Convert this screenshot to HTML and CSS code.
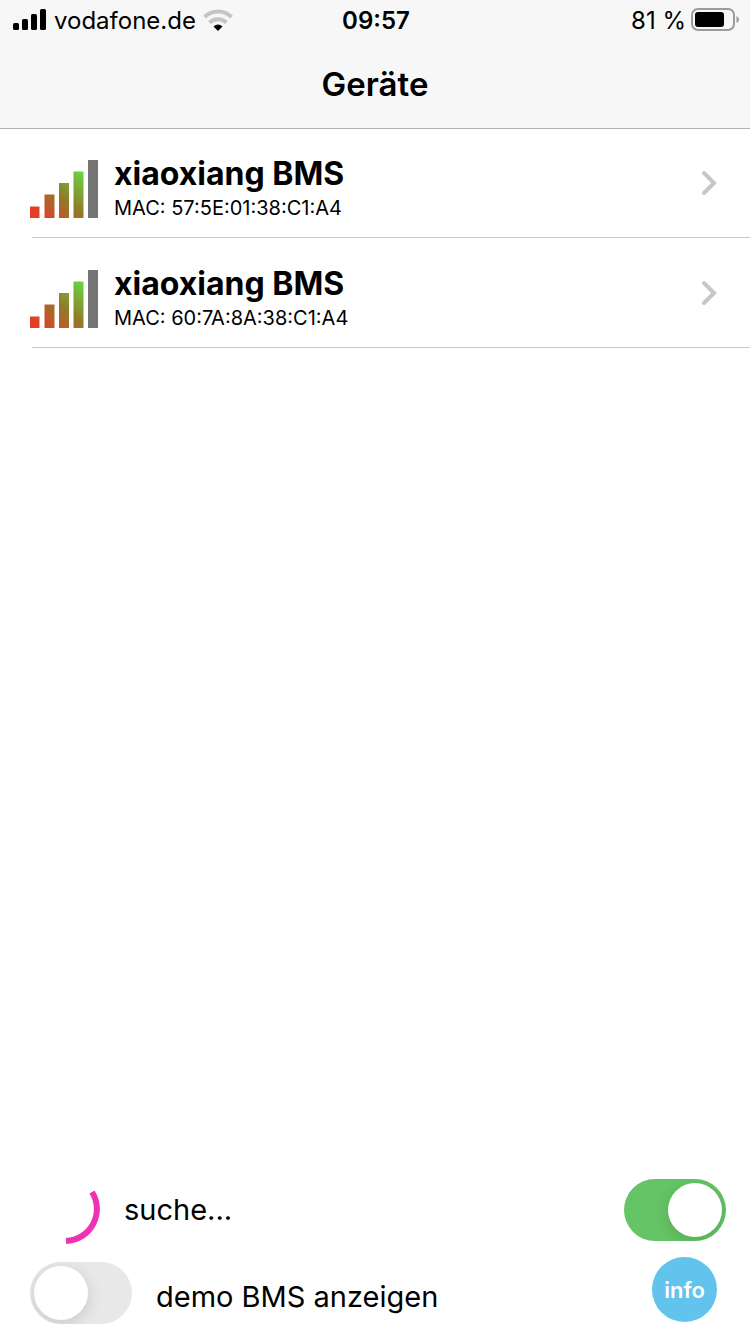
FILE: index.html
```html
<!DOCTYPE html>
<html lang="de">
<head>
  <meta charset="UTF-8">
  <meta name="viewport" content="width=device-width, initial-scale=1.0">
  <title>Geräte</title>
  <link rel="stylesheet" href="styles.css">
</head>
<body>
  <header>
    <div class="status">
      <div class="carrier">
        <svg width="34" height="22" viewBox="0 0 34 22">
          <rect x="0" y="14" width="6" height="7" rx="1.5"/>
          <rect x="9" y="10" width="6" height="11" rx="1.5"/>
          <rect x="18" y="5" width="6" height="16" rx="1.5"/>
          <rect x="27" y="0" width="6" height="21" rx="1.5"/>
        </svg>
        <span>vodafone.de</span>
        <svg class="wifi" width="30" height="22" viewBox="0 0 30 22" fill="none" stroke="#c4c4c4" stroke-width="4">
          <path d="M1.5 8.2A19 19 0 0 1 28.5 8.2"/>
          <path d="M6.5 13.7A12 12 0 0 1 23.5 13.7"/>
          <path d="M15 22L10.5 17.5Q15 13.5 19.5 17.5Z" fill="#000" stroke="none"/>
        </svg>
      </div>
      <time>09:57</time>
      <div class="battery">
        <span>81 %</span>
        <svg width="48" height="24" viewBox="0 0 48 24">
          <rect x="1" y="1" width="42" height="21" rx="6" fill="none" stroke="#9b9b9b" stroke-width="2"/>
          <rect x="4" y="4" width="29" height="15" rx="3"/>
          <path d="M45.5 8Q48 9 48 11.5Q48 14 45.5 15Z" fill="#9b9b9b"/>
        </svg>
      </div>
    </div>
    <h1>Geräte</h1>
  </header>

  <svg class="defs" width="0" height="0">
    <defs>
      <linearGradient id="signal" gradientUnits="userSpaceOnUse" x1="8" y1="58" x2="50" y2="10">
        <stop offset="0" stop-color="#ea3928"/>
        <stop offset="0.5" stop-color="#917a29"/>
        <stop offset="1" stop-color="#67d73f"/>
      </linearGradient>
      <g id="bars">
        <path fill="url(#signal)" d="M0 46.5H9.5V58H0ZM14.5 34.5H24.5V58H14.5ZM29 23H39V58H29ZM43.5 11.5H53.5V58H43.5Z"/>
        <path fill="#747474" d="M58 0H68V58H58Z"/>
      </g>
    </defs>
  </svg>

  <main>
    <ul class="devices">
      <li>
        <a href="#">
          <svg width="68" height="58" viewBox="0 0 68 58"><use href="#bars"/></svg>
          <div class="device">
            <h2>xiaoxiang BMS</h2>
            <p>MAC: 57:5E:01:38:C1:A4</p>
          </div>
          <svg class="chevron" width="16" height="26" viewBox="0 0 16 26"><path d="M3 3L13 13L3 23"/></svg>
        </a>
      </li>
      <li>
        <a href="#">
          <svg width="68" height="58" viewBox="0 0 68 58"><use href="#bars"/></svg>
          <div class="device">
            <h2>xiaoxiang BMS</h2>
            <p>MAC: 60:7A:8A:38:C1:A4</p>
          </div>
          <svg class="chevron" width="16" height="26" viewBox="0 0 16 26"><path d="M3 3L13 13L3 23"/></svg>
        </a>
      </li>
    </ul>
  </main>

  <footer>
    <div class="row search">
      <svg width="70" height="70" viewBox="0 0 70 70"><path d="M62 17A32 32 0 0 1 36 66" fill="none" stroke="#ed33b3" stroke-width="6"/></svg>
      <label for="suche">suche...</label>
      <input type="checkbox" class="switch" id="suche" checked>
    </div>
    <div class="row demo">
      <input type="checkbox" class="switch" id="demo">
      <label for="demo">demo BMS anzeigen</label>
      <button type="button" class="info">info</button>
    </div>
  </footer>
</body>
</html>
```

FILE: styles.css
```css
* {
  box-sizing: border-box;
}

body {
  font-family: Inter, "Liberation Sans", sans-serif;
  margin: 0;
  min-height: 100vh;
  display: flex;
  flex-direction: column;
  background-color: #fff;
  color: #000;
}

svg {
  display: block;
  flex: none;
}

h1, h2, p {
  margin: 0;
}

header {
  height: 128px;
  background-color: #f7f7f7;
  box-shadow: 0 1px #b2b2b2;
}

.status {
  display: grid;
  grid-template-columns: 1fr auto 1fr;
  align-items: center;
  height: 40px;
  padding: 0 11px 0 13px;
  font-size: 24px;
}

.status time {
  font-weight: 600;
}

.carrier, .battery {
  display: flex;
  align-items: center;
  gap: 7px;
}

.battery {
  justify-content: flex-end;
  gap: 5px;
}

h1 {
  font-size: 33px;
  line-height: 88px;
  font-weight: 600;
  text-align: center;
}

.defs {
  position: absolute;
}

main {
  flex: 1;
}

.devices {
  list-style: none;
  margin: 0;
  padding: 0 0 0 32px;
}

.devices li {
  height: 110px;
  border-bottom: 1px solid #c8c7cc;
}

.devices a {
  display: flex;
  align-items: center;
  height: 100%;
  margin-left: -2px;
  padding: 14px 33px 2px 0;
  color: inherit;
  text-decoration: none;
}

.device {
  flex: 1;
  padding: 0 16px;
}

.device h2 {
  font-size: 32px;
  line-height: 38px;
  font-weight: 700;
}

.device p {
  font-size: 20px;
  line-height: 30px;
}

.chevron {
  align-self: flex-start;
  margin-top: 28px;
  fill: none;
  stroke: #c7c7c7;
  stroke-width: 4;
  stroke-linecap: round;
}

footer {
  padding: 0 24px 10px 30px;
  font-size: 29px;
}

.row {
  display: flex;
  align-items: center;
}

.row label {
  flex: 1;
  margin: 0 24px;
  line-height: 54px;
}

.search {
  height: 76px;
}

.demo {
  align-items: flex-end;
  margin-top: 9px;
}

.switch {
  appearance: none;
  flex: none;
  display: flex;
  width: 102px;
  height: 62px;
  margin: 0;
  padding: 4px;
  border-radius: 31px;
  background-color: #e8e8e9;
  overflow: hidden;
}

.switch::before {
  content: "";
  width: 54px;
  height: 54px;
  border-radius: 50%;
  background-color: #fff;
  box-shadow: 0 4px 16px rgba(0, 0, 0, 0.14);
}

.switch:checked {
  justify-content: flex-end;
  background-color: #65c466;
}

.info {
  width: 65px;
  height: 65px;
  margin: 0 9px 2px 0;
  padding: 0;
  border: 0;
  border-radius: 50%;
  background-color: #62c3ed;
  color: #fff;
  font-family: inherit;
  font-size: 22px;
  font-weight: 600;
}
```
